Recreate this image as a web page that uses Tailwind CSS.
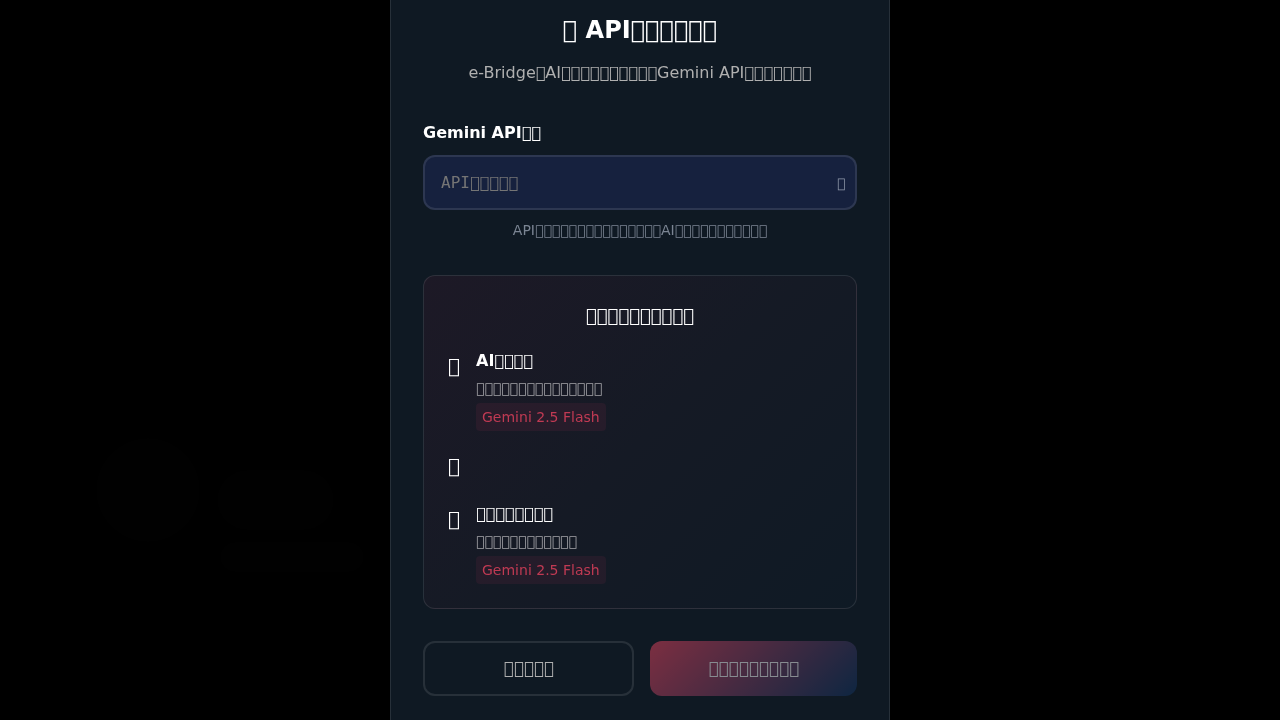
<!DOCTYPE html>
<html lang="ja">
<head>
<meta charset="utf-8">
<title>API</title>
<script src="https://cdn.jsdelivr.net/npm/@tailwindcss/browser@4"></script>
</head>
<body class="bg-black">
<div class="relative flex h-[720px] justify-center overflow-hidden bg-black font-['DejaVu_Sans',sans-serif] text-white">
  <div class="absolute top-[438px] left-[96px] size-[104px] rounded-full bg-[#010101]"></div>
  <div class="absolute top-[470px] left-[217px] h-[60px] w-[117px] rounded-full bg-[#010101]"></div>
  <div class="absolute top-[542px] left-[220px] h-[30px] w-[144px] rounded-full bg-[#010101]"></div>
  <main class="-mt-5 flex h-[760px] w-[500px] flex-col rounded-[20px] border-x border-white/10 bg-[#0f1923] px-8 pt-[31px] text-base will-change-transform">
    <h1 class="text-center text-2xl leading-[38px] font-bold">&#xF0000; API&#xF0000;&#xF0000;&#xF0000;&#xF0000;&#xF0000;&#xF0000;</h1>
    <p class="mt-[10px] text-center leading-[27px] text-[#b0b0b0]">e-Bridge&#xF0000;AI&#xF0000;&#xF0000;&#xF0000;&#xF0000;&#xF0000;&#xF0000;&#xF0000;&#xF0000;&#xF0000;&#xF0000;Gemini API&#xF0000;&#xF0000;&#xF0000;&#xF0000;&#xF0000;&#xF0000;&#xF0000;</p>
    <label for="key" class="mt-8 block leading-[29px] font-bold">Gemini API&#xF0000;&#xF0000;</label>
    <div class="mt-2 flex h-[55px] items-center rounded-xl border-2 border-white/10 bg-[#16213e] pr-[10px] pl-4">
      <input id="key" type="text" placeholder="API&#xF0000;&#xF0000;&#xF0000;&#xF0000;&#xF0000;" class="min-w-0 flex-1 bg-transparent font-['DejaVu_Sans_Mono',monospace] outline-none placeholder:text-[#757575]">
      <button class="pt-[2px] text-[13.33px] leading-5 text-[#8f98a9]">&#xF0000;</button>
    </div>
    <p class="mt-2 text-center text-sm leading-6 text-[#7b8593]">API&#xF0000;&#xF0000;&#xF0000;&#xF0000;&#xF0000;&#xF0000;&#xF0000;&#xF0000;&#xF0000;&#xF0000;&#xF0000;&#xF0000;&#xF0000;&#xF0000;&#xF0000;AI&#xF0000;&#xF0000;&#xF0000;&#xF0000;&#xF0000;&#xF0000;&#xF0000;&#xF0000;&#xF0000;&#xF0000;&#xF0000;</p>
    <section class="mt-[33px] h-[334px] rounded-xl border border-white/10 bg-[linear-gradient(135deg,#1d1926,#151a25_50%,#0f1a25)] px-6 pt-6">
      <h2 class="text-center text-lg leading-8">&#xF0000;&#xF0000;&#xF0000;&#xF0000;&#xF0000;&#xF0000;&#xF0000;&#xF0000;&#xF0000;&#xF0000;</h2>
      <div class="mt-4 flex h-[83px] gap-4">
        <span class="mt-[3px] text-xl leading-[30px]">&#xF0000;</span>
        <div class="flex flex-col items-start">
          <h3 class="leading-[25px] font-bold">AI&#xF0000;&#xF0000;&#xF0000;&#xF0000;</h3>
          <p class="mt-[3px] text-sm leading-6 text-[#a4a4a8]">&#xF0000;&#xF0000;&#xF0000;&#xF0000;&#xF0000;&#xF0000;&#xF0000;&#xF0000;&#xF0000;&#xF0000;&#xF0000;&#xF0000;&#xF0000;&#xF0000;&#xF0000;</p>
          <span class="mt-[3px] rounded bg-[#e94560]/8 px-1.5 text-sm leading-7 text-[#c03a53]">Gemini 2.5 Flash</span>
        </div>
      </div>
      <div class="mt-4 flex h-[38px] gap-4">
        <span class="mt-1 text-xl leading-[30px]">&#xF0000;</span>
      </div>
      <div class="mt-4 flex h-[83px] gap-4">
        <span class="mt-[3px] text-xl leading-[30px]">&#xF0000;</span>
        <div class="flex flex-col items-start">
          <h3 class="leading-[25px] font-bold">&#xF0000;&#xF0000;&#xF0000;&#xF0000;&#xF0000;&#xF0000;&#xF0000;&#xF0000;</h3>
          <p class="mt-[3px] text-sm leading-6 text-[#a4a4a8]">&#xF0000;&#xF0000;&#xF0000;&#xF0000;&#xF0000;&#xF0000;&#xF0000;&#xF0000;&#xF0000;&#xF0000;&#xF0000;&#xF0000;</p>
          <span class="mt-[3px] rounded bg-[#e94560]/8 px-1.5 text-sm leading-7 text-[#c03a53]">Gemini 2.5 Flash</span>
        </div>
      </div>
    </section>
    <div class="mt-8 flex h-[55px] gap-4 text-[16.8px]">
      <button class="w-[211px] rounded-xl border-2 border-white/10 pl-px text-[#b0b0b0]">&#xF0000;&#xF0000;&#xF0000;&#xF0000;&#xF0000;</button>
      <button class="flex-1 rounded-xl bg-[linear-gradient(135deg,#e94560,#0f3460)] pl-px opacity-50">&#xF0000;&#xF0000;&#xF0000;&#xF0000;&#xF0000;&#xF0000;&#xF0000;&#xF0000;&#xF0000;</button>
    </div>
  </main>
</div>
</body>
</html>
